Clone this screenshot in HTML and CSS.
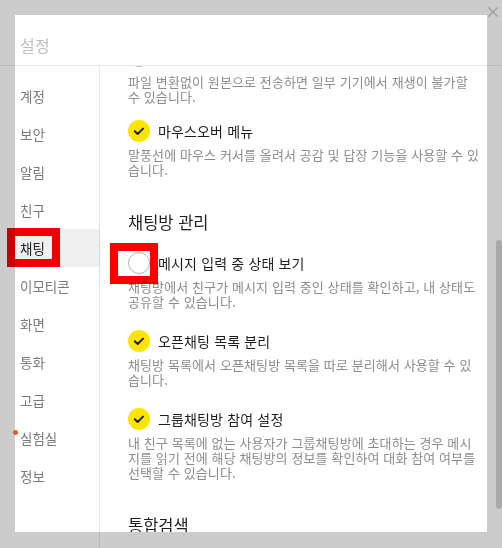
FILE: index.html
```html
<!DOCTYPE html>
<html lang="ko">

<head>
  <meta charset="UTF-8">
  <meta name="viewport" content="width=device-width, initial-scale=1">
  <title>설정</title>
  <link rel="stylesheet" href="styles.css">
</head>

<body>
  <div class="dialog">
    <header class="dialog-header">
      <h1>설정</h1>
    </header>

    <div class="dialog-body">
      <!-- 왼쪽 메뉴 -->
      <nav class="sidebar">
        <a class="menu-item">계정</a>
        <a class="menu-item">보안</a>
        <a class="menu-item">알림</a>
        <a class="menu-item">친구</a>
        <a class="menu-item active">채팅</a>
        <a class="menu-item">이모티콘</a>
        <a class="menu-item">화면</a>
        <a class="menu-item">통화</a>
        <a class="menu-item">고급</a>
        <a class="menu-item new">실험실</a>
        <a class="menu-item">정보</a>
      </nav>

      <!-- 설정 내용 (스크롤된 상태) -->
      <main class="content">
        <div class="content-inner">
          <section class="section">
            <div class="option tight">
              <div class="option-head">
                <span class="radio"></span>
                <span class="option-label">동영상 원본 전송</span>
              </div>
              <p class="option-desc">파일 변환없이 원본으로 전송하면 일부 기기에서 재생이 불가할 수 있습니다.</p>
            </div>
            <div class="option">
              <div class="option-head">
                <span class="radio checked"><svg viewBox="0 0 22 22"><path d="M6.8 11.2l2.9 2.8 5.3-5.4"/></svg></span>
                <span class="option-label">마우스오버 메뉴</span>
              </div>
              <p class="option-desc">말풍선에 마우스 커서를 올려서 공감 및 답장 기능을 사용할 수 있습니다.</p>
            </div>
          </section>

          <section class="section">
            <h2>채팅방 관리</h2>
            <div class="option">
              <div class="option-head">
                <span class="radio"></span>
                <span class="option-label">메시지 입력 중 상태 보기</span>
              </div>
              <p class="option-desc">채팅방에서 친구가 메시지 입력 중인 상태를 확인하고, 내 상태도 공유할 수 있습니다.</p>
            </div>
            <div class="option">
              <div class="option-head">
                <span class="radio checked"><svg viewBox="0 0 22 22"><path d="M6.8 11.2l2.9 2.8 5.3-5.4"/></svg></span>
                <span class="option-label">오픈채팅 목록 분리</span>
              </div>
              <p class="option-desc">채팅방 목록에서 오픈채팅방 목록을 따로 분리해서 사용할 수 있습니다.</p>
            </div>
            <div class="option">
              <div class="option-head">
                <span class="radio checked"><svg viewBox="0 0 22 22"><path d="M6.8 11.2l2.9 2.8 5.3-5.4"/></svg></span>
                <span class="option-label">그룹채팅방 참여 설정</span>
              </div>
              <p class="option-desc">내 친구 목록에 없는 사용자가 그룹채팅방에 초대하는 경우 메시지를 읽기 전에 해당 채팅방의 정보를 확인하여 대화 참여 여부를 선택할 수 있습니다.</p>
            </div>
          </section>

          <section class="section">
            <h2>통합검색</h2>
          </section>
        </div>
      </main>
    </div>
  </div>

  <button class="close-btn" title="닫기">
    <svg viewBox="0 0 10 10"><path d="M0.5 0.5l9 9M9.5 0.5l-9 9"/></svg>
  </button>
  <div class="scroll-thumb"></div>

  <!-- 강조 표시 -->
  <div class="highlight hl-menu"></div>
  <div class="highlight hl-radio"></div>
</body>

</html>
```

FILE: styles.css
```css
* {
  margin: 0;
  padding: 0;
  box-sizing: border-box;
}

body {
  font-family: 'Noto Sans CJK KR', 'Noto Sans', sans-serif;
  background: #cccccc;
  height: 548px;
  overflow: hidden;
  position: relative;
  color: #222;
}

.dialog {
  margin: 15px 0 0 15px;
  width: 472px;
  height: 517px;
  background: #fff;
  display: flex;
  flex-direction: column;
}

.dialog-header {
  height: 51px;
  padding: 8px 0 0 5px;
  display: flex;
  align-items: center;
  position: relative;
}

/* 구분선이 창 밖까지 이어짐 */
.dialog-header::after {
  content: '';
  position: absolute;
  left: -15px;
  width: 502px;
  bottom: 0;
  height: 1px;
  background: rgba(0, 0, 0, 0.09);
}

.dialog-header h1 {
  font-size: 16px;
  font-weight: 400;
  color: #bdbdbd;
  letter-spacing: 0.3px;
}

.dialog-body {
  flex: 1;
  display: flex;
  min-height: 0;
}

.sidebar {
  width: 85px;
  padding-top: 11px;
  position: relative;
  display: flex;
  flex-direction: column;
}

.sidebar::after {
  content: '';
  position: absolute;
  top: 0;
  right: 0;
  bottom: -16px;
  width: 1px;
  background: rgba(0, 0, 0, 0.09);
}

.menu-item {
  display: flex;
  align-items: center;
  height: 38px;
  padding-left: 5px;
  font-size: 13.5px;
  color: #7a7a7a;
  position: relative;
  cursor: pointer;
}

.menu-item.active {
  background: #f0f0f0;
  color: #222;
}

.menu-item.new::before {
  content: '';
  position: absolute;
  left: -2px;
  top: 11px;
  width: 5px;
  height: 5px;
  border-radius: 50%;
  background: #f0582a;
}

.content {
  flex: 1;
  overflow: hidden;
  padding: 0 5px 0 28px;
}

.content-inner {
  margin-top: -21px;
}

.section + .section {
  margin-top: 34px;
}

.section h2 {
  font-size: 16.5px;
  font-weight: 400;
  line-height: 22px;
  color: #1e1e1e;
  margin-bottom: 19px;
}

.option {
  margin-bottom: 21px;
}

.option.tight {
  margin-bottom: 16px;
}

.option.tight .option-desc {
  margin-top: 7px;
}

.option:last-child {
  margin-bottom: 0;
}

.option-head {
  display: flex;
  align-items: center;
  gap: 8px;
  height: 22px;
}

.radio {
  width: 22px;
  height: 22px;
  border-radius: 50%;
  border: 1.5px solid #b5b5b5;
  background: #fff;
  flex-shrink: 0;
}

.radio.checked {
  border: none;
  background: #fee500;
}

.radio svg {
  width: 22px;
  height: 22px;
  display: block;
  fill: none;
  stroke: #1e1e1e;
  stroke-width: 2;
  stroke-linecap: round;
  stroke-linejoin: round;
}

.option-label {
  font-size: 14px;
  letter-spacing: 0.15px;
  color: #1e1e1e;
}

.option-desc {
  margin-top: 5px;
  font-size: 13px;
  letter-spacing: 0.1px;
  line-height: 15px;
  color: #8c8c8c;
}

.close-btn {
  position: absolute;
  top: 7px;
  left: 488px;
  width: 10px;
  height: 10px;
  border: none;
  background: none;
  cursor: pointer;
}

.close-btn svg {
  display: block;
  width: 10px;
  height: 10px;
  stroke: #9c9c9c;
  stroke-width: 1.3;
}

.scroll-thumb {
  position: absolute;
  left: 496px;
  top: 240px;
  width: 6px;
  height: 269px;
  border-radius: 3px;
  background: #a8a8a8;
}

.highlight {
  position: absolute;
  border: 8px solid #ff0000;
  mix-blend-mode: multiply;
  pointer-events: none;
}

.hl-menu {
  left: 7px;
  top: 228px;
  width: 53px;
  height: 39px;
}

.hl-radio {
  left: 110px;
  top: 243px;
  width: 48px;
  height: 41px;
}
```
